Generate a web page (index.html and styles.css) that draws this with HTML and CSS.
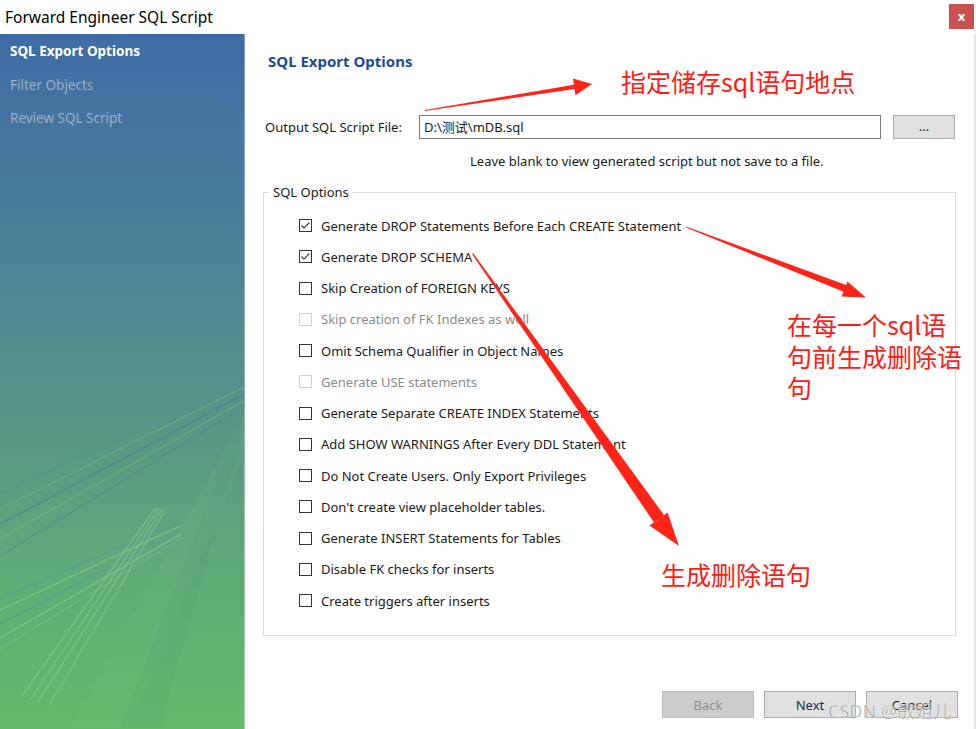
FILE: index.html
```html
<!DOCTYPE html>
<html lang="zh-CN">
<head>
<meta charset="UTF-8" />
<title>Forward Engineer SQL Script</title>
<link rel="stylesheet" href="styles.css">
</head>
<body>

<div class="window">
  <div class="titlebar">
    <span class="title">Forward Engineer SQL Script</span>
    <span class="close">x</span>
  </div>

  <div class="content">
    <div class="sidebar">
      <svg class="streaks" viewBox="0 0 245 694" width="245" height="694">
        <!-- upper set -->
        <g stroke-width="2" fill="none">
          <line x1="245" y1="347" x2="0" y2="460" stroke="rgba(80,150,150,0.45)" />
          <line x1="245" y1="353" x2="0" y2="475" stroke="rgba(110,180,130,0.4)" />
          <line x1="245" y1="360" x2="0" y2="490" stroke="rgba(70,130,150,0.45)" />
          <line x1="245" y1="366" x2="0" y2="505" stroke="rgba(110,185,130,0.4)" />
          <line x1="245" y1="372" x2="0" y2="522" stroke="rgba(80,140,150,0.4)" />
        </g>
        <!-- lower crossing set -->
        <g stroke-width="1.6" fill="none">
          <line x1="180" y1="488" x2="0" y2="564" stroke="rgba(90,150,160,0.45)" />
          <line x1="180" y1="492" x2="0" y2="576" stroke="rgba(140,210,150,0.45)" />
          <line x1="181" y1="496" x2="0" y2="590" stroke="rgba(90,150,160,0.45)" />
          <line x1="181" y1="500" x2="0" y2="604" stroke="rgba(140,210,150,0.45)" />
          <line x1="182" y1="504" x2="0" y2="615" stroke="rgba(120,190,150,0.4)" />
          <line x1="156" y1="473" x2="22" y2="662" stroke="rgba(150,215,150,0.4)" />
          <line x1="159" y1="474" x2="30" y2="666" stroke="rgba(150,215,150,0.35)" />
          <line x1="162" y1="475" x2="38" y2="668" stroke="rgba(150,215,150,0.4)" />
          <line x1="165" y1="476" x2="50" y2="670" stroke="rgba(150,215,150,0.35)" />
        </g>
        <polygon points="245,380 245,420 130,694 70,694" fill="rgba(120,200,130,0.12)" />
        <polygon points="235,400 245,390 160,694 120,694" fill="rgba(70,140,120,0.10)" />
      </svg>
      <ul class="steps">
        <li class="current">SQL Export Options</li>
        <li>Filter Objects</li>
        <li>Review SQL Script</li>
      </ul>
    </div>

    <div class="main">
      <h1>SQL Export Options</h1>

      <div class="file-row">
        <label>Output SQL Script File:</label>
        <div class="file-input">D:\测试\mDB.sql</div>
        <div class="browse">...</div>
      </div>
      <div class="hint">Leave blank to view generated script but not save to a file.</div>

      <fieldset class="options">
        <legend>SQL Options</legend>
        <div class="opt-list">
          <div class="opt checked">
            <span class="box"><svg viewBox="0 0 13 13" width="13" height="13"><path d="M2.5 6.5 L5 9 L10.5 3.5" stroke="#333" stroke-width="1.1" fill="none"/></svg></span>
            Generate DROP Statements Before Each CREATE Statement
          </div>
          <div class="opt checked">
            <span class="box"><svg viewBox="0 0 13 13" width="13" height="13"><path d="M2.5 6.5 L5 9 L10.5 3.5" stroke="#333" stroke-width="1.1" fill="none"/></svg></span>
            Generate DROP SCHEMA
          </div>
          <div class="opt"><span class="box"></span>Skip Creation of FOREIGN KEYS</div>
          <div class="opt disabled"><span class="box"></span>Skip creation of FK Indexes as well</div>
          <div class="opt"><span class="box"></span>Omit Schema Qualifier in Object Names</div>
          <div class="opt disabled"><span class="box"></span>Generate USE statements</div>
          <div class="opt"><span class="box"></span>Generate Separate CREATE INDEX Statements</div>
          <div class="opt"><span class="box"></span>Add SHOW WARNINGS After Every DDL Statement</div>
          <div class="opt"><span class="box"></span>Do Not Create Users. Only Export Privileges</div>
          <div class="opt"><span class="box"></span>Don't create view placeholder tables.</div>
          <div class="opt"><span class="box"></span>Generate INSERT Statements for Tables</div>
          <div class="opt"><span class="box"></span>Disable FK checks for inserts</div>
          <div class="opt"><span class="box"></span>Create triggers after inserts</div>
        </div>
      </fieldset>

      <div class="footer">
        <button class="btn" disabled>Back</button>
        <button class="btn next">Next</button>
        <button class="btn">Cancel</button>
      </div>
    </div>
  </div>
</div>

<!-- red annotations drawn over the screenshot -->
<svg class="arrows" viewBox="0 0 976 729" width="976" height="729">
  <polygon points="425,111 425,110 574,84.8 574.8,89" fill="#ff2418" />
  <polygon points="592,84 572.9,78.5 575.5,95.3" fill="#ff2418" />
  <polygon points="686,226.5 686,227.5 845.5,292.5 847.5,285.5" fill="#ff2418" />
  <polygon points="866,297.5 841.6,296.6 847.4,281.4" fill="#ff2418" />
  <polygon points="472,254 473.2,253.2 664,515 654,522.5" fill="#ff2418" />
  <polygon points="679,546 649.5,525.5 667.5,512.5" fill="#ff2418" />
</svg>
<div class="note note-1">指定储存sql语句地点</div>
<div class="note note-2">在每一个sql语<br>句前生成删除语<br>句</div>
<div class="note note-3">生成删除语句</div>
<div class="watermark">CSDN @敏姐儿</div>

</body>
</html>
```

FILE: styles.css
```css
body {
  margin: 0;
  width: 976px;
  height: 729px;
  overflow: hidden;
  position: relative;
  background: #fff;
  font-family: "Noto Sans", "Noto Sans CJK SC", sans-serif;
  font-size: 13px;
  color: #1a1a1a;
}
.window {
  display: flex;
  flex-direction: column;
  height: 729px;
}

/* Titulek okna */
.titlebar {
  height: 34px;
  flex: 0 0 34px;
  display: flex;
  align-items: center;
  justify-content: space-between;
  padding-left: 5px;
  border-bottom: 1px solid #fff;
  box-sizing: border-box;
}
.title {
  font-size: 15.5px;
  color: #000;
}
.close {
  width: 25px;
  height: 25px;
  margin-right: 2px;
  margin-top: -1px;
  background: #c9514f;
  color: #fff;
  font-size: 13px;
  font-weight: bold;
  display: flex;
  align-items: center;
  justify-content: center;
}

.content {
  flex: 1;
  display: flex;
}

/* Levy panel */
.sidebar {
  width: 245px;
  flex: 0 0 245px;
  position: relative;
  background: linear-gradient(to bottom, #3f6ca6 0%, #4a7f99 28%, #55948a 52%, #5ea879 75%, #66b96a 100%);
  box-shadow: inset -1px 0 0 rgba(255,255,255,0.35);
}
.streaks {
  position: absolute;
  left: 0;
  top: 0;
}
.steps {
  position: relative;
  list-style: none;
  margin: 0;
  padding: 8px 0 0 10px;
}
.steps li {
  font-size: 13.5px;
  height: 33.5px;
  color: #a9bccf;
  opacity: 0.85;
}
.steps li.current {
  color: #fff;
  font-weight: bold;
  opacity: 1;
}

/* Hlavni cast */
.main {
  flex: 1;
  display: flex;
  flex-direction: column;
  padding: 0 16px 0 18px;
  border-right: 2px solid #e3e3e3;
}
h1 {
  margin: 17px 0 0 5px;
  font-size: 15px;
  font-weight: bold;
  color: #1f4a93;
}
.file-row {
  display: flex;
  align-items: center;
  margin-top: 44px;
  height: 24px;
}
.file-row label {
  width: 154px;
  padding-left: 2px;
}
.file-input {
  width: 456px;
  height: 22px;
  border: 1px solid #7a7a7a;
  padding-left: 4px;
  line-height: 22px;
}
.browse {
  width: 60px;
  height: 22px;
  margin-left: 12px;
  background: #e1e1e1;
  border: 1px solid #adadad;
  text-align: center;
  line-height: 20px;
}
.hint {
  margin: 13px 0 0 207px;
}

.options {
  margin: 13px 0 0 0;
  padding: 9px 0 14px 0;
  width: 693px;
  box-sizing: border-box;
  border: 1px solid #dcdcdc;
  height: 453px;
}
.options legend {
  padding: 0 3px;
  margin-left: 6px;
}
.opt-list {
  padding-left: 35px;
}
.opt {
  height: 31.25px;
  display: flex;
  align-items: center;
  gap: 9px;
}
.box {
  width: 13px;
  height: 13px;
  border: 1px solid #333;
  background: #fff;
  display: block;
  flex: 0 0 13px;
  box-sizing: border-box;
  position: relative;
}
.box svg {
  position: absolute;
  left: -1px;
  top: -1px;
}
.opt.disabled {
  color: #8a8a8a;
}
.opt.disabled .box {
  border-color: #d2d2d2;
}

.footer {
  margin-top: auto;
  margin-bottom: 11px;
  display: flex;
  justify-content: flex-end;
  gap: 10px;
}
.btn {
  width: 92px;
  height: 27px;
  font-family: "Noto Sans", sans-serif;
  font-size: 13px;
  background: #e1e1e1;
  border: 1px solid #adadad;
  color: #1a1a1a;
  padding: 0;
}
.btn:disabled {
  background: #cccccc;
  border-color: #bfbfbf;
  color: #8d8d8d;
}
.btn.next {
  color: #1e2b4f;
}

/* Cervene poznamky */
.arrows {
  position: absolute;
  left: 0;
  top: 0;
  pointer-events: none;
}
.note {
  position: absolute;
  font-family: "Noto Sans CJK SC", sans-serif;
  font-size: 25px;
  line-height: 31.5px;
  color: #ff1a14;
}
.note-1 { left: 621px; top: 66px; }
.note-2 { left: 787px; top: 309px; }
.note-3 { left: 661px; top: 559px; }
.watermark {
  position: absolute;
  left: 828px;
  top: 697px;
  font-family: "Noto Sans", "Noto Sans CJK SC", sans-serif;
  font-size: 18px;
  color: rgba(110,110,110,0.65);
  -webkit-text-stroke: 0.5px rgba(255,255,255,0.8);
}
```
